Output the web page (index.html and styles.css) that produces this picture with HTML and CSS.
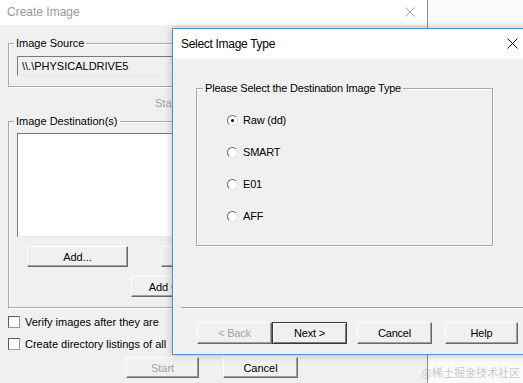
FILE: index.html
```html
<!DOCTYPE html>
<html lang="en">
<head>
    <meta charset="UTF-8">
    <title>Create Image</title>
    <link rel="stylesheet" href="styles.css">
</head>
<body>
    <div class="desktop">
        <!-- ventana de fondo -->
        <div class="window back">
            <div class="titlebar">
                <span class="title">Create Image</span>
                <svg class="close" width="10" height="10" viewBox="0 0 10 10">
                    <path d="M0.5 0.5 L9.5 9.5 M9.5 0.5 L0.5 9.5" stroke="#a0a0a0" stroke-width="1"/>
                </svg>
            </div>
            <div class="win-body">
                <fieldset class="group source">
                    <legend>Image Source</legend>
                    <div class="textbox">\\.\PHYSICALDRIVE5</div>
                </fieldset>
                <div class="evidence-row">
                    <span class="disabled">Starting Evidence Number:</span>
                </div>
                <fieldset class="group dest">
                    <legend>Image Destination(s)</legend>
                    <div class="listbox"></div>
                    <div class="btn-row first">
                        <button class="btn wide">Add...</button>
                        <button class="btn wide">Edit...</button>
                    </div>
                    <div class="btn-row second">
                        <button class="btn wide">Add Overflow Location</button>
                    </div>
                </fieldset>
                <label class="check"><span class="box"></span>Verify images after they are</label>
                <label class="check"><span class="box"></span>Create directory listings of all</label>
                <div class="action-row">
                    <button class="btn start" disabled>Start</button>
                    <button class="btn cancel">Cancel</button>
                </div>
            </div>
        </div>

        <!-- dialogo encima -->
        <div class="dialog">
            <div class="dlg-titlebar">
                <span class="dlg-title">Select Image Type</span>
                <svg class="dlg-close" width="11" height="11" viewBox="0 0 11 11">
                    <path d="M0.5 0.5 L10.5 10.5 M10.5 0.5 L0.5 10.5" stroke="#111" stroke-width="1"/>
                </svg>
            </div>
            <div class="dlg-body">
                <fieldset class="group types">
                    <legend>Please Select the Destination Image Type</legend>
                    <div class="radio-list">
                        <label class="radio"><span class="dot checked"></span>Raw (dd)</label>
                        <label class="radio"><span class="dot"></span>SMART</label>
                        <label class="radio"><span class="dot"></span>E01</label>
                        <label class="radio"><span class="dot"></span>AFF</label>
                    </div>
                </fieldset>
                <div class="separator"></div>
                <div class="dlg-buttons">
                    <button class="btn" disabled>&lt; Back</button>
                    <button class="btn default">Next &gt;</button>
                    <button class="btn gap">Cancel</button>
                    <button class="btn help">Help</button>
                </div>
            </div>
        </div>

        <div class="watermark">@稀土掘金技术社区</div>
    </div>
</body>
</html>
```

FILE: styles.css
```css
*{
    margin: 0px;
    padding: 0px;
    box-sizing: border-box;
}
body{
    font-family: "Liberation Sans", Arial, sans-serif;
    font-size: 11px;
    color: #000;
    background: #fafafa;
    overflow: hidden;
}
.desktop{
    position: relative;
    width: 523px;
    height: 383px;
    display: flex;
}

/* ventana de fondo */
.window.back{
    width: 428px;
    height: 383px;
    background: #f0f0f0;
    border-right: 1px solid #8c8c8c;
    display: flex;
    flex-direction: column;
}
.titlebar{
    height: 25px;
    background: #fff;
    display: flex;
    align-items: center;
    justify-content: space-between;
    padding: 0 12px 2px 7px;
}
.title{
    font-size: 12px;
    color: #9a9a9a;
}
.win-body{
    padding: 11px 0 0 8px;
    display: flex;
    flex-direction: column;
}

.group{
    border: 1px solid #a8a8a8;
    box-shadow: 1px 1px 0 #fff, inset 1px 1px 0 #fff;
    min-inline-size: 0;
}
.group legend{
    margin-left: 5px;
    padding: 0 2px;
    line-height: 14px;
}
.source{
    width: 412px;
}
.textbox{
    margin: 6px 0 10px 8px;
    width: 390px;
    height: 20px;
    line-height: 18px;
    padding-left: 4px;
    border: 1px solid;
    border-color: #7a7a7a #e8e8e8 #e8e8e8 #7a7a7a;
    background: #f0f0f0;
}
.evidence-row{
    margin-top: 9px;
    height: 14px;
    line-height: 14px;
    padding-left: 147px;
}
.disabled{
    color: #a3a3a3;
}
.dest{
    margin-top: 4px;
    width: 412px;
}
.listbox{
    margin: 5px 0 0 8px;
    width: 390px;
    height: 104px;
    background: #fff;
    border: 1px solid;
    border-color: #7a7a7a #e8e8e8 #e8e8e8 #7a7a7a;
}
.btn-row{
    display: flex;
    margin-top: 9px;
}
.btn-row.first{
    padding-left: 18px;
    gap: 33px;
}
.btn-row.second{
    padding-left: 122px;
    margin-bottom: 10px;
}

.btn{
    height: 21px;
    width: 75px;
    font-family: "Liberation Sans", Arial, sans-serif;
    font-size: 11px;
    color: #000;
    background: #f0f0f0;
    border: 1px solid;
    border-color: #fff #6a6a6a #6a6a6a #fff;
    box-shadow: inset -1px -1px 0 #a0a0a0;
}
.btn:disabled{
    color: #a3a3a3;
}
.btn.wide{
    width: 101px;
}
.btn-row.second .btn.wide{
    width: 146px;
}

.check{
    display: flex;
    align-items: center;
    gap: 5px;
    height: 13px;
    white-space: nowrap;
}
.check:first-of-type{
    margin-top: 7px;
}
.check + .check{
    margin-top: 9px;
}
.box{
    flex: none;
    width: 12px;
    height: 12px;
    background: #fff;
    border: 1px solid;
    border-color: #5a5a5a #9a9a9a #9a9a9a #5a5a5a;
}
.action-row{
    display: flex;
    gap: 24px;
    margin-top: 7px;
    padding-left: 118px;
}
.btn.start{
    width: 73px;
}

/* dialogo */
.dialog{
    position: absolute;
    left: 172px;
    top: 28px;
    width: 360px;
    height: 327px;
    border: 1px solid #4b97d6;
    background: #f0f0f0;
    box-shadow: 0 0 8px rgba(0, 0, 0, 0.25);
    display: flex;
    flex-direction: column;
    letter-spacing: -0.2px;
}
.dlg-titlebar{
    height: 30px;
    background: #fff;
    display: flex;
    align-items: center;
    justify-content: space-between;
    padding: 0 13px 1px 8px;
}
.dlg-title{
    font-size: 12px;
    letter-spacing: -0.3px;
}
.dlg-body{
    padding-top: 22px;
    display: flex;
    flex-direction: column;
}
.types{
    margin-left: 23px;
    width: 297px;
}
.types legend{
    margin-left: 6px;
}
.radio-list{
    display: flex;
    flex-direction: column;
    gap: 18px;
    padding: 18px 0 22px 30px;
}
.radio{
    display: flex;
    align-items: center;
    gap: 5px;
    height: 14px;
}
.dot{
    position: relative;
    width: 11px;
    height: 11px;
    border-radius: 50%;
    background: #fff;
    border: 1px solid;
    border-color: #6a6a6a #e0e0e0 #e0e0e0 #6a6a6a;
}
.dot.checked::after{
    content: "";
    position: absolute;
    left: 3px;
    top: 3px;
    width: 3px;
    height: 3px;
    border-radius: 50%;
    background: #000;
}
.separator{
    margin: 61px 7px 0 8px;
    height: 2px;
    border-top: 1px solid #a0a0a0;
    border-bottom: 1px solid #fff;
}
.dlg-buttons{
    display: flex;
    margin-top: 13px;
    padding-left: 24px;
}
.dialog .btn{
    height: 22px;
    letter-spacing: -0.2px;
}
.btn.default{
    border: 1px solid #3a3a3a;
    box-shadow: inset 1px 1px 0 #fff, inset -1px -1px 0 #7a7a7a;
}
.btn.gap{
    margin-left: 10px;
}
.btn.help{
    margin-left: 13px;
    width: 73px;
}

.watermark{
    position: absolute;
    right: 3px;
    bottom: 3px;
    font-family: "Noto Sans CJK SC", sans-serif;
    font-size: 11px;
    color: rgba(150, 150, 150, 0.5);
}
```
